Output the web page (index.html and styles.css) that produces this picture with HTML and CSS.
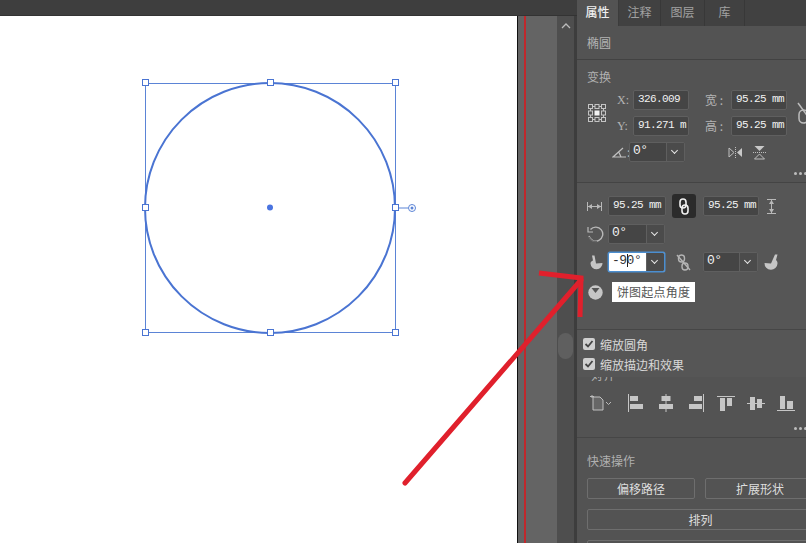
FILE: index.html
```html
<!DOCTYPE html>
<html>
<head>
	<meta charset="utf-8">
	<meta name="viewport" content="width=device-width, initial-scale=1">
	<title>属性面板</title>
	<link rel="stylesheet" href="styles.css">
</head>
<body>
<div class="app">

	<div class="doc">
		<div class="doc-top"></div>
		<div class="doc-body">
			<div class="canvas">
				<svg class="selection" width="517" height="527" viewBox="0 16 517 527">
					<rect x="145.5" y="83.5" width="250" height="249" fill="none" stroke="#5b84d6" stroke-width="1"/>
					<circle cx="270" cy="208" r="125" fill="none" stroke="#4a74d2" stroke-width="2"/>
					<circle cx="270" cy="207.5" r="3" fill="#4a74e0"/>
					<path d="M396 208H408" stroke="#5b84d6"/>
					<circle cx="412" cy="208" r="3.5" fill="#fff" stroke="#5b84d6"/>
					<circle cx="412" cy="208" r="1.5" fill="#5b84d6"/>
					<g fill="#fff" stroke="#4a74d2">
						<rect x="142.5" y="79.5" width="6" height="6"/>
						<rect x="267.5" y="79.5" width="6" height="6"/>
						<rect x="392.5" y="79.5" width="6" height="6"/>
						<rect x="142.5" y="204.5" width="6" height="6"/>
						<rect x="392.5" y="204.5" width="6" height="6"/>
						<rect x="142.5" y="329.5" width="6" height="6"/>
						<rect x="267.5" y="329.5" width="6" height="6"/>
						<rect x="392.5" y="329.5" width="6" height="6"/>
					</g>
				</svg>
			</div>
			<div class="gutter"><div class="guide"></div></div>
			<div class="scroller">
				<svg class="chevron-up" width="10" height="6" viewBox="0 0 10 6"><path d="M1 5L5 1L9 5" fill="none" stroke="#bbb" stroke-width="1.3"/></svg>
				<div class="thumb"></div>
			</div>
		</div>
	</div>

	<div class="panel">
		<div class="tabs">
			<div class="tab active">属性</div>
			<div class="tab">注释</div>
			<div class="tab">图层</div>
			<div class="tab">库</div>
		</div>

		<div class="shape-name">椭圆</div>

		<div class="transform">
			<div class="heading">变换</div>
			<div class="transform-grid">
				<svg class="ref-point" width="20" height="20" viewBox="0 0 20 20" fill="none" stroke="#c4c4c4">
					<rect x="1.5" y="1.5" width="4" height="4"/><rect x="8" y="1.5" width="4" height="4"/><rect x="14.5" y="1.5" width="4" height="4"/>
					<rect x="1.5" y="8" width="4" height="4"/><rect x="14.5" y="8" width="4" height="4"/>
					<rect x="1.5" y="14.5" width="4" height="4"/><rect x="8" y="14.5" width="4" height="4"/><rect x="14.5" y="14.5" width="4" height="4"/>
					<path d="M5.5 3.5H8M12 3.5H14.5M5.5 16.5H8M12 16.5H14.5M3.5 5.5V8M3.5 12V14.5M16.5 5.5V8M16.5 12V14.5"/>
					<rect x="7.5" y="7.5" width="5" height="5" fill="#f2f2f2" stroke="none"/>
				</svg>
				<div class="label serif">X:</div>
				<div class="field">326.009</div>
				<div class="label cjk">宽 :</div>
				<div class="field">95.25 mm</div>
				<svg class="unlink-cut" width="20" height="24" viewBox="0 0 20 24" fill="none" stroke="#bdbdbd" stroke-width="1.5">
					<path d="M1 2L14 20"/><rect x="2" y="9" width="9" height="13" rx="4.5"/>
				</svg>
				<div class="label serif">Y:</div>
				<div class="field">91.271 m</div>
				<div class="label cjk">高 :</div>
				<div class="field">95.25 mm</div>
				<div class="angle">
					<svg width="15" height="11" viewBox="0 0 15 11" fill="none" stroke="#c0c0c0" stroke-width="1.2"><path d="M14 10H1L11 1M7 5.5L9 10"/></svg>
					<span class="colon">:</span>
					<div class="select"><span>0°</span><i class="arrow"></i></div>
				</div>
				<div class="flips">
					<svg width="15" height="11" viewBox="0 0 15 11"><path d="M1 1L6 5.5L1 10Z" fill="none" stroke="#c0c0c0"/><path d="M14 1L9 5.5L14 10Z" fill="#c8c8c8"/><path d="M7.5 0V11" stroke="#c0c0c0" stroke-dasharray="1 1"/></svg>
					<svg width="13" height="15" viewBox="0 0 13 15"><path d="M1.5 1H11.5L6.5 6Z" fill="#c8c8c8"/><path d="M1.5 14H11.5L6.5 9Z" fill="none" stroke="#c0c0c0"/><path d="M0 7.5H13" stroke="#c0c0c0" stroke-dasharray="1 1"/></svg>
				</div>
			</div>
			<div class="dots"><i></i><i></i><i></i></div>
		</div>

		<div class="popup">
			<div class="popup-shape">
				<div class="p-row row-size">
					<svg class="p-icon" width="15" height="9" viewBox="0 0 15 9" fill="none" stroke="#b8b8b8"><path d="M.5 0V9M14.5 0V9M1 4.5H14"/><path d="M1 4.5L5 2V7ZM14 4.5L10 2V7Z" fill="#b8b8b8" stroke="none"/></svg>
					<div class="field w58">95.25 mm</div>
					<div class="link-btn">
						<svg width="10" height="17" viewBox="0 0 10 17" fill="none" stroke="#f0f0f0" stroke-width="1.6"><rect x="1" y="1" width="6" height="9" rx="3"/><rect x="3" y="7" width="6" height="9" rx="3"/></svg>
					</div>
					<div class="field w56">95.25 mm</div>
					<svg class="p-icon-end" width="9" height="15" viewBox="0 0 9 15" fill="none" stroke="#b8b8b8"><path d="M0 .5H9M0 14.5H9M4.5 1V14"/><path d="M4.5 1L2 5H7ZM4.5 14L2 10H7Z" fill="#b8b8b8" stroke="none"/></svg>
				</div>
				<div class="p-row row-rotate">
					<svg class="p-icon" width="17" height="17" viewBox="0 0 17 17" fill="none" stroke="#b8b8b8" stroke-width="1.4"><path d="M3.5 3.5A7 7 0 1 1 2 10" /><path d="M1 1V6H6" stroke-width="1.2"/><path d="M2 11A7 7 0 0 0 10 15.5" stroke="#666"/></svg>
					<div class="select w57"><span>0°</span><i class="arrow"></i></div>
				</div>
				<div class="p-row row-pie">
					<svg class="p-icon" width="13" height="15" viewBox="0 0 13 15"><path d="M2 .5H4.5L6 8.5L12.5 8A6 6 0 1 1 .5 8.5C.5 7 1.5 6 3 5.5Z" fill="#c6c6c6"/></svg>
					<div class="select w57 focus"><span class="typed">-9<b class="caret"></b>0°</span><i class="arrow"></i></div>
					<svg class="unlink" width="15" height="17" viewBox="0 0 15 17" fill="none" stroke="#b4b4b4" stroke-width="1.4"><path d="M1 1L14 16"/><rect x="2.5" y="1" width="6" height="7" rx="3"/><rect x="6" y="9" width="6" height="7" rx="3"/></svg>
					<div class="select w55"><span>0°</span><i class="arrow"></i></div>
					<svg class="pie-end" width="14" height="16" viewBox="0 0 14 16"><path d="M11 .5H13.5L12 6C13 7 13.5 8 13.5 9.5A6.5 6.5 0 1 1 .5 9L7 9.5Z" fill="#c6c6c6"/></svg>
				</div>
				<div class="p-row row-start">
					<svg class="p-icon" width="15" height="15" viewBox="0 0 15 15"><circle cx="7.5" cy="7.5" r="7.2" fill="#c6c6c6"/><path d="M3.5 3H11.5L7.5 8Z" fill="#555"/></svg>
				</div>
				<div class="tooltip">饼图起点角度</div>
			</div>
			<label class="check"><i class="box"><svg width="10" height="10" viewBox="0 0 10 10"><path d="M1.5 5L4 7.5L8.5 2" fill="none" stroke="#444" stroke-width="1.8"/></svg></i>缩放圆角</label>
			<label class="check"><i class="box"><svg width="10" height="10" viewBox="0 0 10 10"><path d="M1.5 5L4 7.5L8.5 2" fill="none" stroke="#444" stroke-width="1.8"/></svg></i>缩放描边和效果</label>
		</div>

		<div class="align">
			<div class="align-title">对齐</div>
			<div class="align-row">
				<svg width="22" height="16" viewBox="0 0 22 16"><path d="M0 1.5H4M2 0V3" stroke="#bbb"/><path d="M3 2H10L13 5V15H3Z" fill="#666" stroke="#c0c0c0"/><path d="M16 7L18.5 9.5L21 7" fill="none" stroke="#bbb"/></svg>
				<svg width="15" height="18" viewBox="0 0 15 18" fill="#c6c6c6"><rect width="1" height="18"/><rect x="2" y="2" width="8" height="5"/><rect x="2" y="10" width="13" height="5"/></svg>
				<svg width="14" height="18" viewBox="0 0 14 18" fill="#c6c6c6"><rect x="6.5" width="1" height="18"/><rect x="2.5" y="2" width="9" height="5"/><rect y="10" width="14" height="5"/></svg>
				<svg width="15" height="18" viewBox="0 0 15 18" fill="#c6c6c6"><rect x="14" width="1" height="18"/><rect x="5" y="2" width="8" height="5"/><rect y="10" width="13" height="5"/></svg>
				<svg width="18" height="15" viewBox="0 0 18 15" fill="#c6c6c6"><rect width="18" height="1"/><rect x="3" y="2" width="5" height="13"/><rect x="10" y="2" width="5" height="8"/></svg>
				<svg width="18" height="15" viewBox="0 0 18 15" fill="#c6c6c6"><rect y="7" width="18" height="1"/><rect x="3" y="1" width="5" height="13"/><rect x="10" y="3" width="5" height="9"/></svg>
				<svg width="18" height="15" viewBox="0 0 18 15" fill="#c6c6c6"><rect y="14" width="18" height="1"/><rect x="3" width="5" height="13"/><rect x="10" y="5" width="6" height="8"/></svg>
			</div>
			<div class="dots"><i></i><i></i><i></i></div>
		</div>

		<div class="quick">
			<div class="heading">快速操作</div>
			<div class="btn-row">
				<div class="btn w108">偏移路径</div>
				<div class="btn w110">扩展形状</div>
			</div>
			<div class="btn wide">排列</div>
			<div class="btn wide"></div>
		</div>
	</div>
</div>

<svg class="red-arrow" width="806" height="543" viewBox="0 0 806 543" fill="none" stroke="#e0202c" stroke-width="5">
	<path d="M405 483L581 280" stroke-linecap="round"/>
	<path d="M539 273L581 278L580 317"/>
</svg>
</body>
</html>
```

FILE: styles.css
```css
html,body{margin: 0;padding: 0;}
body{
	width: 806px;height: 543px;
	position: relative;overflow: hidden;
	background: #535353;color: #ccc;
	font-family: "Noto Sans CJK SC","Noto Sans",sans-serif;
	font-size: 12px;
}
.app{display: flex;width: 806px;height: 543px;}

/* document side */
.doc{width: 577px;display: flex;flex-direction: column;flex: none;}
.doc-top{height: 15px;background: #3e3e3e;border-bottom: 1px solid #333;flex: none;}
.doc-body{display: flex;flex: 1;}
.canvas{width: 517px;background: #fff;position: relative;flex: none;}
.selection{position: absolute;left: 0;top: 0;}
.gutter{
	width: 40px;flex: none;
	background: #646464;
	border-left: 1px solid #111;
	box-sizing: border-box;
	padding-left: 6px;
}
.guide{width: 2px;height: 100%;background: #c0282c;}
.scroller{
	width: 20px;flex: none;box-sizing: border-box;
	background: #4e4e4e;
	border-right: 3px solid #3d3d3d;
	display: flex;flex-direction: column;align-items: center;
	padding-top: 7px;
}
.thumb{width: 15px;height: 26px;border-radius: 8px;background: #5f5f5f;margin-top: 304px;}

/* panel */
.panel{width: 229px;flex: none;overflow: hidden;display: flex;flex-direction: column;background: #535353;}
.tabs{display: flex;height: 26px;flex: none;background: #414141;}
.tab{
	width: 42px;flex: none;
	text-align: center;line-height: 24px;
	color: #a2a2a2;
	border-right: 1px solid #383838;
	box-sizing: border-box;
}
.tab.active{background: #535353;color: #f0f0f0;font-weight: 500;border-right-color: #3c3c3c;}
.tab:nth-child(3){width: 44px;}
.tab:nth-child(4){width: 40px;}

.shape-name{
	height: 34px;flex: none;box-sizing: border-box;
	padding-left: 10px;line-height: 33px;
	color: #b4b4b4;
	border-bottom: 1px solid #424242;
}
.heading{color: #b0b0b0;line-height: 16px;}

.transform{height: 122px;flex: none;box-sizing: border-box;padding: 9px 0 0 10px;position: relative;}
.transform-grid{
	display: grid;
	grid-template-columns: 30px 16px 56px 42px 56px 1fr;
	grid-auto-rows: 20px;
	row-gap: 6px;
	margin-top: 5px;
}
.ref-point{grid-column: 1;grid-row: 1 / 3;align-self: center;}
.label{color: #b4b4b4;line-height: 20px;}
.label.serif{font-family: "Liberation Serif",serif;font-size: 12px;}
.label.cjk{padding-left: 16px;}
.unlink-cut{grid-column: 6;grid-row: 1 / 3;align-self: center;margin-left: 10px;}

.field,.select{
	font-family: "Liberation Mono","DejaVu Sans Mono",monospace;
	font-size: 11px;line-height: 16px;
	letter-spacing: -.6px;
	background: #454545;color: #f2f2f2;
	border: 1px solid #5f5f5f;
	border-radius: 2px;
	box-sizing: border-box;
	height: 20px;
	padding-left: 4px;
	white-space: nowrap;overflow: hidden;
}
.select{display: flex;padding-left: 0;}
.select span{flex: 1;padding-left: 3px;font-size: 13px;}
.arrow{
	width: 17px;flex: none;position: relative;
	border-left: 1px solid #5f5f5f;
	background: #4b4b4b;
}
.arrow::after{
	content: "";position: absolute;left: 5px;top: 5px;
	width: 5px;height: 5px;
	border-right: 1.5px solid #e6e6e6;border-bottom: 1.5px solid #e6e6e6;
	transform: rotate(45deg);
	box-sizing: border-box;
}
.angle{grid-column: 1 / 4;display: flex;align-items: center;justify-content: flex-end;padding-right: 4px;}
.angle .select{width: 56px;}
.angle .colon{width: 2px;color: #b4b4b4;line-height: 20px;}
.flips{grid-column: 4 / 6;display: flex;align-items: center;gap: 10px;padding-left: 39px;}
.dots{display: flex;gap: 2px;position: absolute;right: -1px;bottom: 7px;}
.dots i{width: 3px;height: 3px;border-radius: 50%;background: #bdbdbd;}

/* shape options popup */
.popup{
	height: 195px;flex: none;box-sizing: border-box;
	background: #565656;
	border-top: 1px solid #444;
	position: relative;z-index: 1;
}
.popup-shape{
	height: 147px;box-sizing: border-box;
	padding: 11px 0 0 10px;
	border-bottom: 1px solid #464646;
	position: relative;
}
.p-row{display: flex;align-items: center;height: 20px;}
.p-row > .p-icon{flex: none;}
.row-size{height: 24px;}
.row-size .p-icon{margin-right: 6px;}
.row-rotate{margin-top: 6px;}
.row-rotate .p-icon{margin-right: 4px;}
.row-pie{margin-top: 8px;}
.row-pie .p-icon{margin-left: 3px;margin-right: 5px;}
.row-start{margin-top: 10px;}
.row-start .p-icon{margin-left: 1px;}
.w58{width: 58px;}
.w56{width: 56px;}
.w57{width: 57px;}
.w55{width: 55px;}
.link-btn{
	width: 24px;height: 24px;margin: 0 7px 0 6px;
	background: #2b2b2b;border-radius: 3px;
	display: flex;align-items: center;justify-content: center;
}
.p-icon-end{margin-left: 8px;}
.select.focus{background: #fff;border-color: #4b8ed0;color: #333;box-shadow: 0 0 0 .5px #4b8ed0;}
.typed{position: relative;letter-spacing: -.5px;}
.caret{display: inline-block;width: 1px;height: 13px;background: #222;margin: 0 -1px 0 0;vertical-align: -3px;}
.unlink{margin: 0 12px 0 11px;flex: none;}
.pie-end{margin-left: 6px;flex: none;}
.tooltip{
	position: absolute;left: 35px;top: 99px;
	width: 83px;height: 20px;
	background: #fff;color: #555;
	text-align: center;line-height: 20px;
	letter-spacing: .2px;
}
.check{display: flex;align-items: center;height: 20px;color: #d8d8d8;padding-left: 6px;}
.check:first-of-type{margin-top: 4px;}
.box{
	width: 12px;height: 12px;border-radius: 2px;
	background: #cfcfcf;margin-right: 5px;
	display: flex;align-items: center;justify-content: center;
}

/* align */
.align{height: 61px;flex: none;box-sizing: border-box;position: relative;border-bottom: 1px solid #464646;}
.align-title{margin: -9px 0 0 14px;height: 14px;line-height: 14px;color: #b0b0b0;}
.align-row{display: flex;align-items: center;height: 18px;margin-top: 12px;padding-left: 13px;}
.align-row svg{flex: none;margin-right: 16px;}
.align-row svg:nth-child(4){margin-right: 13px;}
.align-row svg:nth-child(5),.align-row svg:nth-child(6){margin-right: 12px;}

/* quick actions */
.quick{flex: 1;padding: 15px 0 0 10px;}
.btn-row{display: flex;gap: 10px;margin-top: 9px;width: 300px;}
.btn{
	box-sizing: border-box;flex: none;
	height: 21px;line-height: 19px;
	text-align: center;color: #dedede;
	border: 1px solid #6e6e6e;border-radius: 2px;
}
.w108{width: 108px;}
.w110{width: 110px;}
.wide{width: 227px;margin-top: 10px;}

.red-arrow{position: absolute;left: 0;top: 0;z-index: 2;pointer-events: none;}
```
